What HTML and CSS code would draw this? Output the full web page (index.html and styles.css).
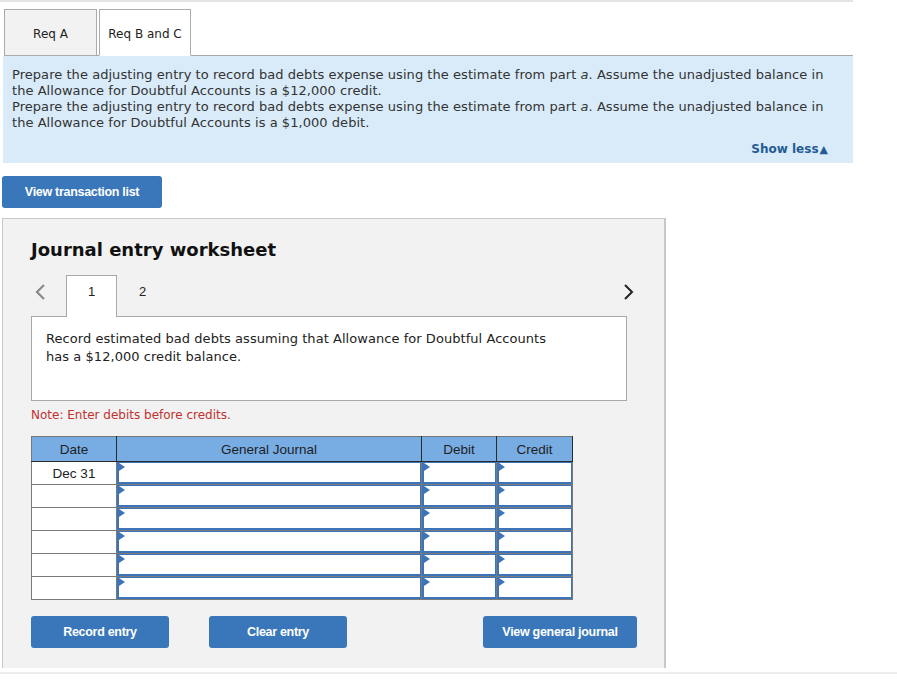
FILE: index.html
```html
<!DOCTYPE html>
<html>
<head>
<meta charset="utf-8">
<link rel="stylesheet" href="styles.css">
</head>
<body>
<div class="page">
  <div class="top-rule"></div>
  <div class="tabs">
    <div class="tab">Req A</div>
    <div class="tab active">Req B and C</div>
  </div>
  <div class="instructions">
    <p>Prepare the adjusting entry to record bad debts expense using the estimate from part <i>a</i>. Assume the unadjusted balance in the Allowance for Doubtful Accounts is a $12,000 credit.</p>
    <p>Prepare the adjusting entry to record bad debts expense using the estimate from part <i>a</i>. Assume the unadjusted balance in the Allowance for Doubtful Accounts is a $1,000 debit.</p>
    <div class="show-less">Show less<span class="tri">&#9650;</span></div>
  </div>
  <button class="btn btn-list">View transaction list</button>
  <div class="worksheet">
    <h2 class="ws-title">Journal entry worksheet</h2>
    <div class="ws-nav">
      <svg class="chev" width="12" height="18" viewBox="0 0 12 18"><path d="M10 2 L3 9 L10 16" fill="none" stroke="#8a8a8a" stroke-width="2.2"/></svg>
      <div class="step active">1</div>
      <div class="step">2</div>
      <svg class="chev right" width="12" height="18" viewBox="0 0 12 18"><path d="M2 2 L9 9 L2 16" fill="none" stroke="#222" stroke-width="2"/></svg>
    </div>
    <div class="ws-desc">Record estimated bad debts assuming that Allowance for Doubtful Accounts has a $12,000 credit balance.</div>
    <div class="note">Note: Enter debits before credits.</div>
    <table class="journal">
      <thead>
        <tr><th class="c-date">Date</th><th class="c-gj">General Journal</th><th class="c-dr">Debit</th><th class="c-cr">Credit</th></tr>
      </thead>
      <tbody>
        <tr><td class="date">Dec 31</td><td class="in"><div class="box"></div></td><td class="in"><div class="box"></div></td><td class="in"><div class="box"></div></td></tr>
        <tr><td class="date"></td><td class="in"><div class="box"></div></td><td class="in"><div class="box"></div></td><td class="in"><div class="box"></div></td></tr>
        <tr><td class="date"></td><td class="in"><div class="box"></div></td><td class="in"><div class="box"></div></td><td class="in"><div class="box"></div></td></tr>
        <tr><td class="date"></td><td class="in"><div class="box"></div></td><td class="in"><div class="box"></div></td><td class="in"><div class="box"></div></td></tr>
        <tr><td class="date"></td><td class="in"><div class="box"></div></td><td class="in"><div class="box"></div></td><td class="in"><div class="box"></div></td></tr>
        <tr><td class="date"></td><td class="in"><div class="box"></div></td><td class="in"><div class="box"></div></td><td class="in"><div class="box"></div></td></tr>
      </tbody>
    </table>
    <div class="actions">
      <button class="btn btn-record">Record entry</button>
      <button class="btn btn-clear">Clear entry</button>
      <button class="btn btn-view">View general journal</button>
    </div>
  </div>
  <div class="bottom-rule"></div>
</div>
</body>
</html>
```
FILE: styles.css
```css
* { box-sizing: border-box; }
body {
  margin: 0;
  font-family: "DejaVu Sans", Verdana, sans-serif;
  color: #222;
  background: #fff;
}
.page { width: 897px; }
.top-rule { width: 853px; height: 2px; background: #e3e3e3; }
.tabs {
  display: flex;
  margin: 7px 0 0 4px;
  width: 849px;
  border-bottom: 1px solid #a8a8a8;
  gap: 2px;
}
.tab {
  width: 93px;
  height: 47px;
  margin-bottom: -1px;
  border: 1px solid #ababab;
  background: #f2f2f2;
  font-size: 12px;
  display: flex;
  align-items: center;
  justify-content: center;
  padding-top: 2px;
  color: #222;
}
.tab.active { background: #fff; border-bottom-color: #fff; width: 92px; }
.instructions {
  margin-left: 3px;
  width: 850px;
  height: 107px;
  background: #d9ebf9;
  padding: 11px 16px 0 9px;
  font-size: 13px;
  letter-spacing: 0.05px;
  line-height: 16px;
  color: #333;
}
.instructions p { margin: 0; }
.show-less {
  text-align: right;
  padding-right: 9px;
  margin-top: 10px;
  font-size: 12px;
  letter-spacing: 0;
  font-weight: bold;
  color: #245b94;
}
.show-less .tri { font-size: 11px; margin-left: 1px; }
.btn {
  border: none;
  background: #3a77ba;
  color: #fff;
  font-family: "Liberation Sans", Arial, sans-serif;
  font-weight: bold;
  font-size: 12.5px;
  letter-spacing: -0.3px;
  border-radius: 3px;
  height: 32px;
  padding: 0;
}
.btn-list { display: block; margin: 13px 0 0 2px; width: 160px; }
.worksheet {
  margin: 10px 0 0 2px;
  width: 664px;
  height: 450px;
  background: #f2f2f2;
  border: 1px solid #c8c8c8;
  border-bottom: none;
  border-right: 2px solid #c8c8c8;
  padding: 0 0 0 28px;
}
.ws-title {
  margin: 18px 0 0 0;
  font-size: 18px;
  font-weight: bold;
  color: #111;
  height: 26px;
  line-height: 26px;
}
.ws-nav {
  display: flex;
  align-items: flex-end;
  margin-top: 12px;
  height: 41px;
  width: 596px;
}
.chev { align-self: center; margin: 0 0 8px 3px; }
.chev.right { margin-left: auto; margin-right: -8px; }
.step {
  width: 51px;
  height: 41px;
  display: flex;
  align-items: center;
  justify-content: center;
  font-family: "Liberation Sans", Arial, sans-serif;
  font-size: 13px;
  color: #222;
  margin-bottom: -1px;
  padding-bottom: 10px;
}
.step.active {
  margin-left: 20px;
  background: #fff;
  border: 1px solid #a8a8a8;
  border-bottom: none;
  height: 42px;
}
.ws-desc {
  width: 596px;
  height: 85px;
  background: #fff;
  border: 1px solid #a8a8a8;
  padding: 13px 68px 13px 14px;
  font-size: 13px;
  letter-spacing: 0.05px;
  line-height: 18px;
  color: #222;
}
.note {
  margin-top: 7px;
  font-size: 12px;
  color: #c0312f;
  height: 15px;
}
.journal {
  margin-top: 13px;
  border-collapse: collapse;
  font-family: "Liberation Sans", Arial, sans-serif;
  font-size: 13.5px;
  background: #fff;
}
.journal th {
  background: #78ade4;
  font-weight: normal;
  color: #1e1e1e;
  height: 25px;
  border: 1px solid #2a2a2a;
  border-top-color: #777;
  padding: 0;
  text-align: center;
}
.journal th.c-date { border-left-color: #777; }
.c-date { width: 85px; }
.c-gj { width: 305px; }
.c-dr { width: 75px; }
.c-cr { width: 76px; }
.journal td {
  height: 23px;
  border: 1px solid #7a7a7a;
  padding: 0;
}
.journal td.date { text-align: center; color: #222; vertical-align: middle; }
.journal td.in { position: relative; }
.box {
  height: 22px;
  border: 1px solid #3b74b8;
  border-left-width: 2px;
  border-bottom-width: 2px;
  position: relative;
  background: #fff;
}
.box::before {
  content: "";
  position: absolute;
  left: 0;
  top: 0;
  border-left: 6px solid #3b74b8;
  border-top: 4px solid transparent;
  border-bottom: 4px solid transparent;
}
.actions {
  display: flex;
  margin-top: 16px;
}
.btn-record { width: 138px; }
.btn-clear { width: 138px; margin-left: 40px; }
.btn-view { width: 154px; margin-left: 136px; }
.bottom-rule {
  width: 897px;
  height: 2px;
  background: #ececec;
  margin-top: 4px;
}
```
